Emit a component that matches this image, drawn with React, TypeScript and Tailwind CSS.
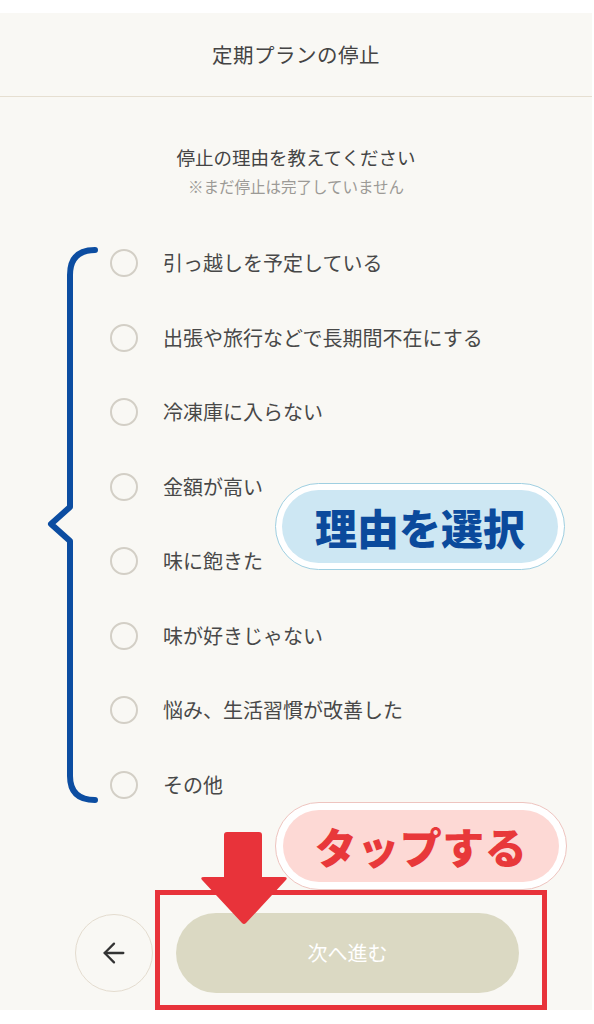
import { ArrowLeft } from "lucide-react";

const reasons = [
  "引っ越しを予定している",
  "出張や旅行などで長期間不在にする",
  "冷凍庫に入らない",
  "金額が高い",
  "味に飽きた",
  "味が好きじゃない",
  "悩み、生活習慣が改善した",
  "その他",
];

const font = { fontFamily: '"Noto Sans CJK JP", "Noto Sans", sans-serif' };

export default function App() {
  return (
    <div className="w-[594px] h-[1024px] bg-white pt-[13px] overflow-hidden" style={font}>
      <div className="relative w-[592px] h-[997px] bg-[#f9f8f4]">
        {/* header */}
        <header className="h-[84px] border-b border-[#e6dfd1] flex items-center justify-center">
          <h1 className="text-[20.5px] text-[#444] tracking-[0.5px]">定期プランの停止</h1>
        </header>

        {/* question */}
        <div className="pt-[47px] flex flex-col items-center">
          <p className="text-[18.5px] leading-[26px] text-[#444]">停止の理由を教えてください</p>
          <p className="mt-[6px] text-[15.5px] leading-[20px] text-[#9c9a96]">※まだ停止は完了していません</p>
        </div>

        {/* reasons */}
        <ul className="mt-[30px]">
          {reasons.map(r => (
            <li key={r} className="h-[74.5px] flex items-center pl-[110px] gap-[25px]">
              <span className="w-[28px] h-[28px] rounded-full border-2 border-[#d3cfc6] shrink-0" />
              <span className="text-[20px] text-[#484848]">{r}</span>
            </li>
          ))}
        </ul>

        {/* footer buttons */}
        <div className="mt-[91px] flex items-center pl-[75px] gap-[23px]">
          <button className="w-[78px] h-[78px] rounded-full border-[1.5px] border-[#e4dccf] flex items-center justify-center">
            <ArrowLeft size={32} strokeWidth={1.7} color="#333" />
          </button>
          <button className="w-[343px] h-[80px] rounded-full bg-[#dbd9c3] text-white text-[20px] flex items-center justify-center">
            次へ進む
          </button>
        </div>

        {/* annotations */}
        <svg className="absolute left-[44px] top-[231px] pointer-events-none" width="60" height="562" viewBox="0 0 60 562">
          <path
            d="M51,6 Q26,6 26,31 L26,263 L7,280 L26,297 L26,532 Q26,556 51,556"
            fill="none"
            stroke="#0c4da1"
            strokeWidth="6"
            strokeLinecap="round"
            strokeLinejoin="round"
          />
        </svg>

        <div className="absolute left-[275px] top-[470px] w-[290px] h-[87px] rounded-full border-[1.5px] border-[#9fcfe1] bg-white p-[6px]">
          <div className="w-full h-full rounded-full bg-[#cde7f3] flex items-center justify-center">
            <span className="text-[42px] font-black text-[#0b4a9c] leading-none">理由を選択</span>
          </div>
        </div>

        <div className="absolute left-[275px] top-[789px] w-[292px] h-[88px] rounded-full border-[1.5px] border-[#eec4bf] bg-white p-[7px]">
          <div className="w-full h-full rounded-full bg-[#fdd9d5] flex items-center justify-center">
            <span className="text-[42px] font-black text-[#e8383a] leading-none tracking-[0.5px]">タップする</span>
          </div>
        </div>

        <div className="absolute left-[155px] top-[877px] w-[392px] h-[120px] border-[5px] border-[#e8333a] pointer-events-none" />

        <svg className="absolute left-[198px] top-[815px] pointer-events-none" width="92" height="100" viewBox="0 0 92 100">
          <path
            d="M29,4 H61 Q64,4 64,7 V49 H86 Q91,49 87,53 L48,95 Q46,97 44,95 L5,53 Q1,49 6,49 H26 V7 Q26,4 29,4 Z"
            fill="#e8333a"
          />
        </svg>
      </div>
    </div>
  );
}
